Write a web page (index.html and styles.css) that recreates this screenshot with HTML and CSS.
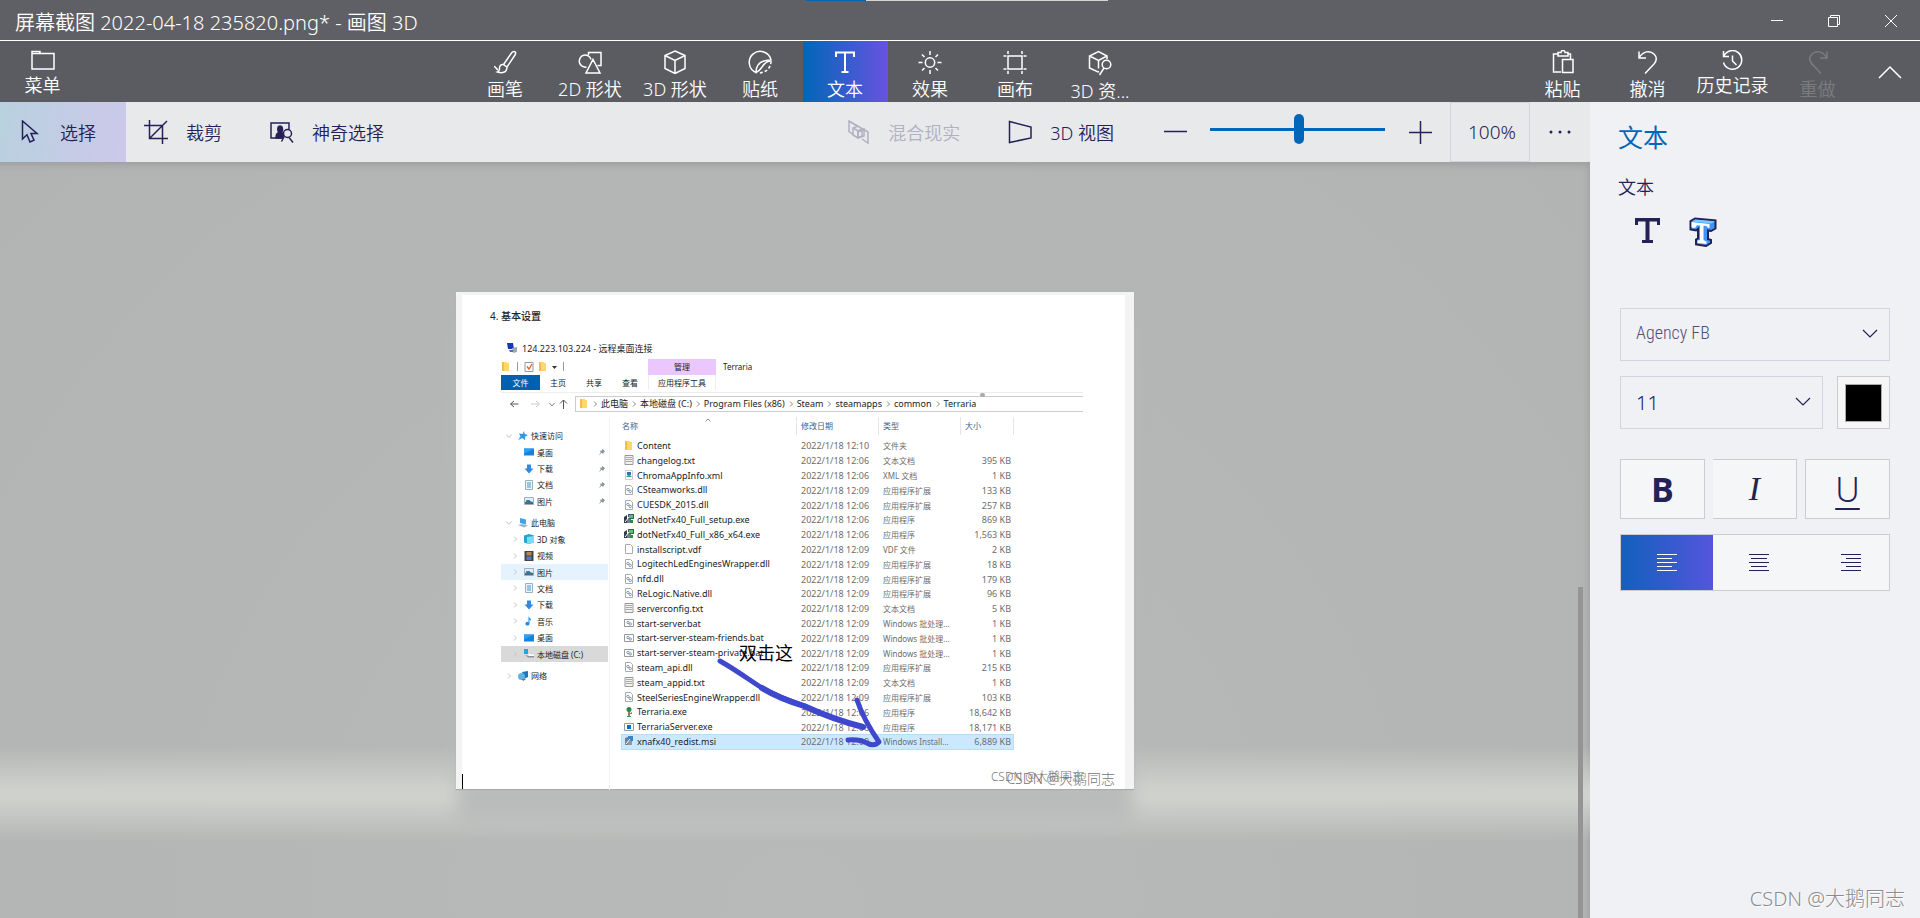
FILE: index.html
```html
<!DOCTYPE html>
<html lang="zh-CN">
<head>
    <meta charset="UTF-8">
    <meta name="viewport" content="width=device-width, initial-scale=1.0">
    <title>画图 3D</title>
    <link rel="stylesheet" href="styles.css">
</head>
<body>
    <!-- Shared icons -->
    <svg class="sprite" aria-hidden="true">
        <symbol id="i-folder" viewBox="0 0 10 10"><path d="M1 0h5v1h2v8H1z" fill="#ffd76e"/><path d="M1 0h2v9H1z" fill="#f3bd4a"/></symbol>
        <symbol id="i-txt" viewBox="0 0 10 10"><path d="M1 .5h8v9H1z" fill="#f2f2f2" stroke="#999"/><path d="M2 2.500h6M2 4.500h6M2 6.500h6" stroke="#aaa"/></symbol>
        <symbol id="i-file" viewBox="0 0 10 10"><path d="M1.500.5h5l2 2v7h-7z" fill="#fff" stroke="#aaa"/></symbol>
        <symbol id="i-dll" viewBox="0 0 10 10"><path d="M1.500.5h5l2 2v7h-7z" fill="#fff" stroke="#aaa"/><circle cx="4" cy="4.500" r="1.200" fill="none" stroke="#7d9bb0"/><circle cx="6.200" cy="6.500" r="1.200" fill="none" stroke="#7d9bb0"/></symbol>
        <symbol id="i-bat" viewBox="0 0 10 10"><path d="M.5 1.500h9v7h-9z" fill="#fff" stroke="#999"/><circle cx="4" cy="4.500" r="1.200" fill="none" stroke="#7d9bb0"/><circle cx="6.200" cy="6" r="1.200" fill="none" stroke="#7d9bb0"/></symbol>
        <symbol id="i-xml" viewBox="0 0 10 10"><path d="M1.500.5h7v9h-7z" fill="#fff" stroke="#ccc"/><path d="M3 2h4v3H3z" fill="#2e74b5"/><path d="M2 7l3-3 3 3z" fill="#35a58b"/></symbol>
        <symbol id="i-setup" viewBox="0 0 10 10"><path d="M4 0h6v5H4z" fill="#44566c"/><path d="M5 1h4v3H5z" fill="#58c46a"/><path d="M0 3l3-2v8H0z" fill="#333b4a"/><path d="M3 5h4v4H3z" fill="#6d7d90"/><path d="M6 6h3v3H6z" fill="#2f8c3b"/><path d="M1 8l4-5" stroke="#fff"/></symbol>
        <symbol id="i-msi" viewBox="0 0 10 10"><path d="M4 0h5v5H4z" fill="#3b84c6"/><path d="M1 2l3-1v8H1z" fill="#75828e"/><path d="M4 5h4v4H4z" fill="#8f9aa3"/><path d="M2 8l4-5" stroke="#fff"/></symbol>
        <symbol id="i-tree" viewBox="0 0 10 10"><path d="M4.200 4h1.600v6H4.200z" fill="#8a5a33"/><circle cx="5" cy="2.500" r="2.500" fill="#258a4b"/><path d="M5 7l3-2v2zM3 9h4v1H3z" fill="#3c9a55"/></symbol>
        <symbol id="i-app" viewBox="0 0 10 10"><path d="M.5 1.500h9v7h-9z" fill="#fff" stroke="#999"/><path d="M3 3h4v4H3z" fill="#0a6fc9"/></symbol>
        <symbol id="i-desk" viewBox="0 0 10 10"><path d="M0 1.500h10v7H0z" fill="#1583dd"/><path d="M0 1.500h10l-10 5z" fill="#2ba0f5"/></symbol>
        <symbol id="i-down" viewBox="0 0 10 10"><path d="M3 .5h4v4h2.500L5 9.500.5 4.500H3z" fill="#2f8bdc"/></symbol>
        <symbol id="i-doc" viewBox="0 0 10 10"><path d="M1.500.5h7v9h-7z" fill="#eef4f8" stroke="#9bb0bd"/><path d="M3 3h4M3 5h4M3 7h4" stroke="#4f94c8"/></symbol>
        <symbol id="i-pic" viewBox="0 0 10 10"><path d="M.5 1.500h9v7h-9z" fill="#dff0fb" stroke="#aab"/><path d="M1 8V6l3-1.500L9 6v2z" fill="#3a7289"/><path d="M2 4h4v1H2z" fill="#2d86d4"/></symbol>
        <symbol id="i-star" viewBox="0 0 10 10"><path d="M6 0l.7 3L10 4 7 5.800 7.200 9.500 4.500 7 0 9l2.500-3.500L1 2.500l3.500.5z" fill="#2f97e6"/></symbol>
        <symbol id="i-pc" viewBox="0 0 10 10"><path d="M2 0l6 1.500v5L2 5z" fill="#3fa3e6"/><path d="M0 7l4-1 6 1.500L6 9.500z" fill="#9fb2c2"/></symbol>
        <symbol id="i-cube" viewBox="0 0 10 10"><path d="M0 1.500L5 0l5 1.500v7L5 10 0 8.500z" fill="#21a5cf"/><path d="M3 3l7-1v6.500L5 10 3 9z" fill="#72e0f2"/></symbol>
        <symbol id="i-video" viewBox="0 0 10 10"><path d="M.5 0h9v10h-9z" fill="#444"/><path d="M2.500 1h5v3.500h-5z" fill="#b88454"/><path d="M2.500 5.500h5V9h-5z" fill="#5b78c4"/></symbol>
        <symbol id="i-music" viewBox="0 0 10 10"><path d="M4.500 0c.5 2 3 2.500 2.500 5-.5-1-1-1.500-1.500-1.500V8a2 1.800 0 1 1-1-1.800z" fill="#1c8de0"/></symbol>
        <symbol id="i-disk" viewBox="0 0 10 10"><path d="M0 0h4v5H0z" fill="#1ba7e0"/><path d="M1 6l3 2.500h6V7H5z" fill="#8c9296"/><path d="M4 5l6 .5V7H5z" fill="#fff"/></symbol>
        <symbol id="i-net" viewBox="0 0 10 10"><path d="M4 1l6-1v6L6 8z" fill="#1f76b8"/><circle cx="3.500" cy="5.500" r="3.500" fill="#5fb4e6"/><path d="M4 8l4 0-3 2z" fill="#4a7592"/></symbol>
        <symbol id="i-pin" viewBox="0 0 10 10"><path d="M5.500 1L9 4.500 7.500 5 6.500 7.500 4.500 6 1 9.500 3.500 5 2 3.500 5 3z" fill="#8a97a3"/></symbol>
        <symbol id="i-right" viewBox="0 0 6 6"><path d="M2 .5L4.500 3 2 5.500" fill="none" stroke="currentColor"/></symbol>
        <symbol id="i-open" viewBox="0 0 6 6"><path d="M.5 1.500L3 4.500l2.500-3" fill="none" stroke="currentColor"/></symbol>
        <symbol id="i-chevron" viewBox="0 0 16 10"><path d="M1 1l7 7 7-7" fill="none" stroke="currentColor" stroke-width="1.200"/></symbol>
    </svg>

    <header class="titlebar">
        <h1>屏幕截图 2022-04-18 235820.png* - 画图 3D</h1>
        <div class="loading"></div>
        <div class="window-buttons">
            <button aria-label="最小化"><svg width="12" height="12" viewBox="0 0 12 12"><path d="M0 5.500h12"/></svg></button>
            <button aria-label="还原"><svg width="12" height="12" viewBox="0 0 12 12"><path d="M.5 2.500h9v9h-9zM2.500 2.500v-2h9v9h-2"/></svg></button>
            <button aria-label="关闭"><svg width="12" height="12" viewBox="0 0 12 12"><path d="M0 0l12 12M12 0L0 12"/></svg></button>
        </div>
    </header>

    <nav class="ribbon">
        <button class="tab">
            <svg width="24" height="20" viewBox="0 0 24 20"><path d="M1 1.500h8v2H23v15.500H1z"/><path d="M1 3.500h7l1-1" /></svg>
            <span>菜单</span>
        </button>
        <div class="tabs">
            <button class="tab">
                <svg width="24" height="24" viewBox="0 0 24 24"><path d="M21 1.500c2 0 2 2 1 3.500l-8 12-3.500-2.500L18.500 3c.8-1 1.500-1.500 2.500-1.500zM10.500 14.500c-2-.5-4 1-4 3.500 0 2-.5 3.500-2 4 4 1.500 9.500 1 9.500-5M1 16.500c2 0 2 3 4 3"/></svg>
                <span>画笔</span>
            </button>
            <button class="tab">
                <svg width="24" height="24" viewBox="0 0 24 24"><path d="M10.500 5V2.500H23v13h-3.500M8.500 17A6 6 0 1 1 13 9.500M15 9.500l7 13.500H8z"/></svg>
                <span>2D 形状</span>
            </button>
            <button class="tab">
                <svg width="24" height="24" viewBox="0 0 24 24"><path d="M12 1l10 4.500v13L12 23.500 2 18.500v-13zM2 5.500l10 5 10-5M12 10.500v13"/></svg>
                <span>3D 形状</span>
            </button>
            <button class="tab">
                <svg width="24" height="24" viewBox="0 0 24 24"><path d="M8 22.500A11 11 0 1 1 23 10C14 10 8 14 8 22.500zM8 22.500C15 20 14 12 22 11"/><path d="M23 11c0 7-5 12-13 12" stroke-dasharray="3 2"/></svg>
                <span>贴纸</span>
            </button>
            <button class="tab active">
                <svg width="24" height="24" viewBox="0 0 24 24"><path d="M3 7V2.500h18V7M12 2.500V22M8.500 22h7" stroke-width="2"/></svg>
                <span>文本</span>
            </button>
            <button class="tab">
                <svg width="24" height="24" viewBox="0 0 24 24"><circle cx="12" cy="12.500" r="4.700"/><path d="M12 1v4M12 20v4M.5 12.500h4M19.500 12.500h4M4 4.500l2.500 2.500M17.500 18l2.500 2.500M20 4.500L17.500 7M6.500 18L4 20.500"/></svg>
                <span>效果</span>
            </button>
            <button class="tab">
                <svg width="24" height="24" viewBox="0 0 24 24"><path d="M5 6h14v13H5zM5 1v3M19 1v3M5 21v3M19 21v3M.5 6h3M20.500 6h3M.5 19h3M20.500 19h3"/></svg>
                <span>画布</span>
            </button>
            <button class="tab">
                <svg width="24" height="26" viewBox="0 0 24 26"><path d="M11 21.500l-1 .5-8.500-4V6L10.500 1.500 19 6v3M1.500 6l9 4.500L19 6M10.500 10.500v8"/><circle cx="18.500" cy="14.500" r="4.300"/><path d="M16 18l-4.500 7"/></svg>
                <span>3D 资...</span>
            </button>
        </div>
        <button class="tab">
            <svg width="24" height="24" viewBox="0 0 24 24"><path d="M10 22H2.500V4H7M17 4h2.500v5M7 2.500h3a2 2 0 0 1 4 0h3V6H7zM11.500 9.500H22v13H11.500z"/></svg>
            <span>粘贴</span>
        </button>
        <button class="tab">
            <svg width="24" height="24" viewBox="0 0 24 24"><path d="M3 1.500V8h7M3 8c4-7 11-8 15-4 3.500 3.500 2.500 7 0 10l-9 9.500"/></svg>
            <span>撤消</span>
        </button>
        <button class="tab">
            <svg width="22" height="20" viewBox="0 0 22 20"><path d="M1.500 1v5.500H7M2 6a9.300 9.300 0 1 1-.5 6.500M10.500 5.500V11l4 4"/></svg>
            <span>历史记录</span>
        </button>
        <button class="tab" disabled>
            <svg width="24" height="24" viewBox="0 0 24 24"><path d="M21 1.500V8h-7M21 8C17 1 10 0 6 4c-3.500 3.500-2.500 7 0 10l9 9.500"/></svg>
            <span>重做</span>
        </button>
        <button class="collapse" aria-label="折叠"><svg width="24" height="14" viewBox="0 0 24 14"><path d="M1 13L12 2l11 11"/></svg></button>
    </nav>

    <div class="content">
        <main class="stage">
            <div class="toolbar">
                <button class="tool selected">
                    <svg width="24" height="24" viewBox="0 0 24 24"><path d="M4.500 1v18l4.500-4.200 3 7.200 4-1.800-3-6.700h6z"/></svg>
                    选择
                </button>
                <button class="tool">
                    <svg width="24" height="24" viewBox="0 0 24 24"><path d="M5.500 0v18.500H24M0 5.500h18.500V24M5.500 18.500L23 1"/></svg>
                    裁剪
                </button>
                <button class="tool">
                    <svg width="24" height="24" viewBox="0 0 24 24"><path d="M12 18H1V3h18v6"/><path d="M6 18c0-4 1-5 3-5.500-2-2-1.500-6.500 1-6.500s3.500 4 1.500 6.500c1 .5 2 1 2 3l-1 2.500z" fill="currentColor"/><circle cx="17.500" cy="13.500" r="4"/><path d="M14 17l-2.500 4.500M19 17.500l4 5"/></svg>
                    神奇选择
                </button>
                <div class="view-tools">
                    <button class="tool" disabled>
                        <svg width="24" height="24" viewBox="0 0 24 24"><path d="M7 14.500l-4-3V1l19 11v11l-6-4M3 1l8 5M7 8l5-2 4 3v7l-4 2-5-3zM7 8l5 3 4-2M12 11v7"/><path d="M12 18v-6l6-3v7z"/></svg>
                        混合现实
                    </button>
                    <button class="tool">
                        <svg width="24" height="24" viewBox="0 0 24 24"><path d="M1.500 1.500l21.500 5.500v11L1.500 22.500z"/></svg>
                        3D 视图
                    </button>
                    <button class="zoom-step zoom-out" aria-label="缩小"><svg width="23" height="23" viewBox="0 0 23 23"><path d="M0 10.500h23"/></svg></button>
                    <input class="zoom-slider" type="range" min="0" max="100" value="51" aria-label="缩放">
                    <button class="zoom-step" aria-label="放大"><svg width="23" height="23" viewBox="0 0 23 23"><path d="M0 11.500h23M11.500 0v23"/></svg></button>
                    <button class="zoom-value">100%</button>
                    <button class="more" aria-label="更多"><svg width="22" height="4" viewBox="0 0 22 4"><circle cx="2" cy="2" r="1.500"/><circle cx="11" cy="2" r="1.500"/><circle cx="20" cy="2" r="1.500"/></svg></button>
                </div>
            </div>

            <div class="workspace">
                <div class="floor"></div>
                <div class="artboard">
                    <h2 class="step">4. <b>基本设置</b></h2>

                    <div class="explorer">
                        <div class="remote-title">
                            <svg width="11" height="11" viewBox="0 0 11 11"><path d="M0 0h6l1 6H1z" fill="#1637b8"/><path d="M5 5l5-1v5l-4 1z" fill="#9aa9b5"/><path d="M2 7h4v2H3z" fill="#5d7088"/></svg>
                            124.223.103.224 - 远程桌面连接
                        </div>
                        <div class="quick-bar">
                            <svg width="10" height="10"><use href="#i-folder"/></svg>
                            <i class="bar"></i>
                            <svg width="10" height="10" viewBox="0 0 10 10"><path d="M1 .5h8v9H1z" fill="#fff" stroke="#999"/><path d="M3 4.500l2 2.500 3-5" fill="none" stroke="#e2622a" stroke-width="1.300"/></svg>
                            <svg width="10" height="10"><use href="#i-folder"/></svg>
                            <svg width="5" height="10" viewBox="0 0 5 10"><path d="M0 4h5L2.500 7z" fill="#333"/></svg>
                            <i class="bar"></i>
                            <span class="manage">管理</span>
                            <span class="folder-name">Terraria</span>
                        </div>
                        <div class="menu-bar">
                            <span class="file-menu">文件</span>
                            <span>主页</span>
                            <span>共享</span>
                            <span>查看</span>
                            <span class="app-tools">应用程序工具</span>
                        </div>
                        <div class="address-row">
                            <svg class="arrows" width="68" height="12" viewBox="0 0 68 12"><path d="M9.500 6h8M13 3L9.500 6l3.500 3M62.500 11V2M59 5.500L62.500 2 66 5.500" stroke="#555"/><path d="M30 6h8M35 3l3.500 3L35 9" stroke="#ccc"/><path d="M48.500 5l2.500 3 2.500-3" stroke="#888"/></svg>
                            <div class="address">
                                <svg width="10" height="10"><use href="#i-folder"/></svg>
                                <svg class="sep"><use href="#i-right"/></svg><span>此电脑</span>
                                <svg class="sep"><use href="#i-right"/></svg><span>本地磁盘 (C:)</span>
                                <svg class="sep"><use href="#i-right"/></svg><span>Program Files (x86)</span>
                                <svg class="sep"><use href="#i-right"/></svg><span>Steam</span>
                                <svg class="sep"><use href="#i-right"/></svg><span>steamapps</span>
                                <svg class="sep"><use href="#i-right"/></svg><span>common</span>
                                <svg class="sep"><use href="#i-right"/></svg><span>Terraria</span>
                            </div>
                            <i class="knob"></i>
                        </div>

                        <div class="panes">
                            <div class="tree">
                                <ul class="quick">
                                    <li class="root"><svg class="sep"><use href="#i-open"/></svg><svg class="ico"><use href="#i-star"/></svg>快速访问</li>
                                    <li><svg class="ico"><use href="#i-desk"/></svg>桌面<svg class="ico pin"><use href="#i-pin"/></svg></li>
                                    <li><svg class="ico"><use href="#i-down"/></svg>下载<svg class="ico pin"><use href="#i-pin"/></svg></li>
                                    <li><svg class="ico"><use href="#i-doc"/></svg>文档<svg class="ico pin"><use href="#i-pin"/></svg></li>
                                    <li><svg class="ico"><use href="#i-pic"/></svg>图片<svg class="ico pin"><use href="#i-pin"/></svg></li>
                                </ul>
                                <ul class="computer">
                                    <li class="root"><svg class="sep"><use href="#i-open"/></svg><svg class="ico"><use href="#i-pc"/></svg>此电脑</li>
                                    <li><svg class="sep"><use href="#i-right"/></svg><svg class="ico"><use href="#i-cube"/></svg>3D 对象</li>
                                    <li><svg class="sep"><use href="#i-right"/></svg><svg class="ico"><use href="#i-video"/></svg>视频</li>
                                    <li class="hover"><svg class="sep"><use href="#i-right"/></svg><svg class="ico"><use href="#i-pic"/></svg>图片</li>
                                    <li><svg class="sep"><use href="#i-right"/></svg><svg class="ico"><use href="#i-doc"/></svg>文档</li>
                                    <li><svg class="sep"><use href="#i-right"/></svg><svg class="ico"><use href="#i-down"/></svg>下载</li>
                                    <li><svg class="sep"><use href="#i-right"/></svg><svg class="ico"><use href="#i-music"/></svg>音乐</li>
                                    <li><svg class="sep"><use href="#i-right"/></svg><svg class="ico"><use href="#i-desk"/></svg>桌面</li>
                                    <li class="current"><svg class="sep"><use href="#i-right"/></svg><svg class="ico"><use href="#i-disk"/></svg>本地磁盘 (C:)</li>
                                </ul>
                                <ul class="network">
                                    <li class="root"><svg class="sep"><use href="#i-right"/></svg><svg class="ico"><use href="#i-net"/></svg>网络</li>
                                </ul>
                            </div>

                            <table class="files">
                                <thead>
                                    <tr><th class="name">名称<svg class="sort" width="6" height="6" viewBox="0 0 6 6"><path d="M.5 4.500L3 2l2.500 2.500" fill="none" stroke="#888"/></svg></th><th class="date">修改日期</th><th class="type">类型</th><th class="size">大小</th></tr>
                                </thead>
                                <tbody>
                                    <tr><td><svg class="ico"><use href="#i-folder"/></svg>Content</td><td>2022/1/18 12:10</td><td class="kind">文件夹</td><td></td></tr>
                                    <tr><td><svg class="ico"><use href="#i-txt"/></svg>changelog.txt</td><td>2022/1/18 12:06</td><td class="kind">文本文档</td><td>395 KB</td></tr>
                                    <tr><td><svg class="ico"><use href="#i-xml"/></svg>ChromaAppInfo.xml</td><td>2022/1/18 12:06</td><td class="kind">XML 文档</td><td>1 KB</td></tr>
                                    <tr><td><svg class="ico"><use href="#i-dll"/></svg>CSteamworks.dll</td><td>2022/1/18 12:09</td><td class="kind">应用程序扩展</td><td>133 KB</td></tr>
                                    <tr><td><svg class="ico"><use href="#i-dll"/></svg>CUESDK_2015.dll</td><td>2022/1/18 12:06</td><td class="kind">应用程序扩展</td><td>257 KB</td></tr>
                                    <tr><td><svg class="ico"><use href="#i-setup"/></svg>dotNetFx40_Full_setup.exe</td><td>2022/1/18 12:06</td><td class="kind">应用程序</td><td>869 KB</td></tr>
                                    <tr><td><svg class="ico"><use href="#i-setup"/></svg>dotNetFx40_Full_x86_x64.exe</td><td>2022/1/18 12:06</td><td class="kind">应用程序</td><td>1,563 KB</td></tr>
                                    <tr><td><svg class="ico"><use href="#i-file"/></svg>installscript.vdf</td><td>2022/1/18 12:09</td><td class="kind">VDF 文件</td><td>2 KB</td></tr>
                                    <tr><td><svg class="ico"><use href="#i-dll"/></svg>LogitechLedEnginesWrapper.dll</td><td>2022/1/18 12:09</td><td class="kind">应用程序扩展</td><td>18 KB</td></tr>
                                    <tr><td><svg class="ico"><use href="#i-dll"/></svg>nfd.dll</td><td>2022/1/18 12:09</td><td class="kind">应用程序扩展</td><td>179 KB</td></tr>
                                    <tr><td><svg class="ico"><use href="#i-dll"/></svg>ReLogic.Native.dll</td><td>2022/1/18 12:09</td><td class="kind">应用程序扩展</td><td>96 KB</td></tr>
                                    <tr><td><svg class="ico"><use href="#i-txt"/></svg>serverconfig.txt</td><td>2022/1/18 12:09</td><td class="kind">文本文档</td><td>5 KB</td></tr>
                                    <tr><td><svg class="ico"><use href="#i-bat"/></svg>start-server.bat</td><td>2022/1/18 12:09</td><td class="kind">Windows 批处理...</td><td>1 KB</td></tr>
                                    <tr><td><svg class="ico"><use href="#i-bat"/></svg>start-server-steam-friends.bat</td><td>2022/1/18 12:09</td><td class="kind">Windows 批处理...</td><td>1 KB</td></tr>
                                    <tr><td><svg class="ico"><use href="#i-bat"/></svg>start-server-steam-private.bat</td><td>2022/1/18 12:09</td><td class="kind">Windows 批处理...</td><td>1 KB</td></tr>
                                    <tr><td><svg class="ico"><use href="#i-dll"/></svg>steam_api.dll</td><td>2022/1/18 12:09</td><td class="kind">应用程序扩展</td><td>215 KB</td></tr>
                                    <tr><td><svg class="ico"><use href="#i-txt"/></svg>steam_appid.txt</td><td>2022/1/18 12:09</td><td class="kind">文本文档</td><td>1 KB</td></tr>
                                    <tr><td><svg class="ico"><use href="#i-dll"/></svg>SteelSeriesEngineWrapper.dll</td><td>2022/1/18 12:09</td><td class="kind">应用程序扩展</td><td>103 KB</td></tr>
                                    <tr><td><svg class="ico"><use href="#i-tree"/></svg>Terraria.exe</td><td>2022/1/18 12:06</td><td class="kind">应用程序</td><td>18,642 KB</td></tr>
                                    <tr><td><svg class="ico"><use href="#i-app"/></svg>TerrariaServer.exe</td><td>2022/1/18 12:06</td><td class="kind">应用程序</td><td>18,171 KB</td></tr>
                                    <tr class="picked"><td><svg class="ico"><use href="#i-msi"/></svg>xnafx40_redist.msi</td><td>2022/1/18 12:09</td><td class="kind">Windows Install...</td><td>6,889 KB</td></tr>
                                </tbody>
                            </table>
                        </div>
                    </div>

                    <!-- Things drawn on top of the picture -->
                    <svg class="drawing" viewBox="0 0 678 497">
                        <path d="M264 369C280 378 292 387 306 396Q322 405 348 414" stroke-width="5"/>
                        <path d="M306 396Q322 406 348 414Q376 427 407 435" stroke-width="6"/>
                        <path d="M401 408C406 423 414 437 423 450Q418 455 411 451Q403 447 392 448" stroke-width="5"/>
                    </svg>
                    <span class="note">双击这</span>
                    <span class="mark mark-small">CSDN @大鹅同志</span>
                    <span class="mark mark-large">CSDN @大鹅同志</span>
                    <span class="caret"></span>
                </div>
                <div class="scrollbar"></div>
            </div>
        </main>

        <aside class="panel">
            <h2>文本</h2>
            <h3>文本</h3>
            <div class="text-kind">
                <button aria-label="2D 文本"><svg width="26" height="28" viewBox="0 0 26 28"><path d="M0 1h25v7h-3V4.500h-7.500V23H18v3H7v-3h3.500V4.500H3V8H0z" fill="#242157"/></svg></button>
                <button aria-label="3D 文本"><svg width="28" height="30" viewBox="0 0 28 30"><path d="M1.500 4L6 1.500l20.500 2v8L22 14l-3-.5v8.500l3 1v3L17 29l-10-1.500v-5l2-1V12l-2 1.500-5.500-1z" fill="#3f95f6" stroke="#242157" stroke-width="2"/><path d="M6 2.500l20 1.800-4 2.200-19-2z" fill="#7cc6ff"/><path d="M2.500 5l18 2v4l-2-.5-1-1.500-3-.3V23l3 1.500V27l-9-1v-2.500l2.500-.5V8.500L8 8.300 6 11l-3.500-.5z" fill="#fff"/></svg></button>
            </div>
            <div class="field">
                <select class="font-family" aria-label="字体"><option>Agency FB</option></select>
                <svg width="16" height="10"><use href="#i-chevron"/></svg>
            </div>
            <div class="size-row">
                <div class="field">
                    <select aria-label="字号"><option>11</option></select>
                    <svg width="16" height="10"><use href="#i-chevron"/></svg>
                </div>
                <button class="color" aria-label="颜色"><span></span></button>
            </div>
            <div class="style-row">
                <button class="bold">B</button>
                <button class="italic">I</button>
                <button class="underline">U</button>
            </div>
            <div class="align-row">
                <button class="active" aria-label="左对齐"><svg width="20" height="18" viewBox="0 0 20 18"><path d="M0 .5h20M0 4.500h15M0 8.500h20M0 12.500h15M0 16.500h20"/></svg></button>
                <button aria-label="居中"><svg width="20" height="18" viewBox="0 0 20 18"><path d="M0 .5h20M2 4.500h16M0 8.500h20M2 12.500h16M0 16.500h20"/></svg></button>
                <button aria-label="右对齐"><svg width="20" height="18" viewBox="0 0 20 18"><path d="M0 .5h20M5 4.500h15M0 8.500h20M5 12.500h15M0 16.500h20"/></svg></button>
            </div>
            <p class="signature">CSDN @大鹅同志</p>
        </aside>
    </div>
</body>
</html>
```
FILE: styles.css
```css
* {
    margin: 0;
    padding: 0;
    box-sizing: border-box;
}

body {
    display: flex;
    flex-direction: column;
    height: 100vh;
    overflow: hidden;
    font-family: "Noto Sans", "Noto Sans CJK SC", sans-serif;
    font-weight: 350;
    font-size: 18px;
    color: #242157;
    background: #b5b7b6;
}

button, select {
    font: inherit;
    color: inherit;
    background: none;
    border: none;
}

ul {
    list-style: none;
}

svg {
    flex: none;
    display: block;
}

button svg {
    fill: none;
    stroke: currentColor;
    stroke-width: 1.5;
}

.sprite {
    position: absolute;
    width: 0;
    height: 0;
}

/* Title bar */
.titlebar {
    position: relative;
    display: flex;
    align-items: center;
    justify-content: space-between;
    height: 41px;
    padding-left: 15px;
    padding-top: 2px;
    background: #5f6065;
    border-bottom: 1px solid #fff;
    color: #fff;
}

.titlebar h1 {
    font-size: 20px;
    font-weight: 350;
}

.loading {
    position: absolute;
    top: 0;
    left: 42%;
    width: 302px;
    height: 1px;
    background: linear-gradient(90deg, #0067b8 60px, #d5d5d5 60px);
}

.window-buttons {
    display: flex;
}

.window-buttons button {
    width: 57px;
    height: 34px;
    display: flex;
    align-items: center;
    justify-content: center;
    padding-right: 2px;
}

.window-buttons svg {
    stroke-width: 1;
}

/* Ribbon */
.ribbon {
    display: flex;
    height: 61px;
    background: #5b5c61;
    color: #fff;
}

.tabs {
    flex: 1;
    display: flex;
    justify-content: center;
}

.tab {
    width: 85px;
    padding-top: 9px;
    display: flex;
    flex-direction: column;
    align-items: center;
    gap: 2px;
    line-height: 26px;
    white-space: nowrap;
}

.tab.active {
    background: linear-gradient(90deg, #0067b8, #6853e0);
}

.tab:disabled {
    color: #7b7c80;
}

.collapse {
    width: 60px;
    display: flex;
    align-items: center;
    justify-content: center;
}

.content {
    flex: 1;
    display: flex;
    min-height: 0;
}

.stage {
    flex: 1;
    display: flex;
    flex-direction: column;
    min-width: 0;
}

/* Toolbar */
.toolbar {
    display: flex;
    height: 60px;
    background: #e8e9eb;
}

.tool {
    display: flex;
    align-items: center;
    gap: 18px;
    padding: 0 30px 0 18px;
    white-space: nowrap;
}

.tool.selected {
    background: linear-gradient(100deg, #b8d1df, #cdc8ea);
}

.tool:disabled {
    margin-right: 4px;
    color: #b0b0c2;
}

.view-tools {
    display: flex;
    align-items: center;
    margin-left: auto;
}

.view-tools .tool {
    height: 60px;
    padding-right: 26px;
}

.zoom-step {
    width: 60px;
    height: 60px;
    display: flex;
    align-items: center;
    justify-content: center;
}

.zoom-out {
    width: 70px;
}

.zoom-slider {
    appearance: none;
    width: 175px;
    height: 54px;
    margin: 0 5px 6px 0;
    background: none;
}

.zoom-slider::-webkit-slider-runnable-track {
    height: 3px;
    background: #0067b8;
}

.zoom-slider::-webkit-slider-thumb {
    appearance: none;
    width: 10px;
    height: 30px;
    margin-top: -14px;
    border-radius: 5px;
    background: #0067b8;
}

.zoom-value {
    width: 80px;
    height: 60px;
    border: 1px solid #d3d4de;
    padding-left: 4px;
    font-size: 19px;
}

.more {
    width: 60px;
    display: flex;
    justify-content: center;
}

.more svg {
    fill: currentColor;
    stroke: none;
}

/* Workspace */
.workspace {
    position: relative;
    flex: 1;
    display: flex;
    align-items: center;
    justify-content: center;
    background: radial-gradient(circle at 50% 100%, #b8bab9, #b2b4b3);
    box-shadow: inset -6px 8px 8px -6px #999b9a;
}

.floor {
    position: absolute;
    left: 0;
    right: 0;
    bottom: 76px;
    height: 96px;
    background: linear-gradient(#cfd1cd00, #cfd1cd 45%, #cfd1cd 55%, #cfd1cd00);
}

.scrollbar {
    position: absolute;
    right: 7px;
    bottom: 0;
    width: 5px;
    height: 331px;
    background: #949494;
}

.artboard {
    position: relative;
    width: 678px;
    height: 497px;
    padding: 14px 42px 0 28px;
    border: solid #f3f3f3;
    border-width: 3px 9px 0 6px;
    background: #fff;
    color: #222;
    font-size: 8px;
    font-weight: 400;
    box-shadow: 0 1px 1px #a9abaa, 0 36px 16px -2px #babcbb;
}

.step {
    font-size: 10px;
    font-weight: 400;
    line-height: 15px;
}

.step b {
    font-weight: 500;
}

.explorer {
    padding: 17px 0 0 11px;
}

.remote-title {
    display: flex;
    align-items: center;
    gap: 4px;
    height: 16px;
    padding-left: 6px;
    font-size: 9px;
}

.quick-bar {
    display: flex;
    align-items: center;
    gap: 4px;
    height: 16px;
    margin-top: 2px;
}

.quick-bar .bar {
    width: 1px;
    height: 9px;
    margin: 0 2px;
    background: #999;
}

.manage {
    width: 68px;
    margin-left: 78px;
    line-height: 16px;
    text-align: center;
    background: #eac8ff;
}

.folder-name {
    margin-left: 3px;
}

.menu-bar {
    display: flex;
    height: 18px;
    line-height: 15px;
    border-bottom: 1px solid #eee;
}

.menu-bar span {
    width: 36px;
    text-align: center;
    white-space: nowrap;
}

.menu-bar .file-menu {
    width: 39px;
    height: 15px;
    color: #fff;
    background: #0061b0;
}

.menu-bar .app-tools {
    width: 68px;
    height: 15px;
    border: solid #eee;
    border-width: 0 1px;
}

.address-row {
    position: relative;
    display: flex;
    align-items: center;
    height: 16px;
    margin-top: 3px;
}

.knob {
    position: absolute;
    top: -3px;
    right: 98px;
    width: 5px;
    height: 4px;
    border-radius: 2px;
    background: #aaa;
}

.arrows {
    fill: none;
}

.address {
    flex: 1;
    display: flex;
    align-items: center;
    gap: 3px;
    height: 16px;
    margin-left: 6px;
    padding-left: 3px;
    border: 1px solid #ccc;
    border-right: none;
    font-size: 9px;
    white-space: nowrap;
}

.sep {
    width: 6px;
    height: 6px;
    color: #888;
}

.panes {
    display: flex;
    margin-top: 5px;
}

.tree {
    width: 109px;
    height: 373px;
    padding-top: 11px;
    border-right: 1px solid #f2f2f2;
}

.tree ul {
    display: flex;
    flex-direction: column;
    margin-bottom: 5px;
}

.quick {
    height: 82px;
}

.computer {
    height: 148px;
}

.network {
    height: 16px;
}

.tree li {
    flex: 1;
    display: flex;
    align-items: center;
    gap: 3px;
    width: 107px;
    padding-left: 11px;
}

.tree li.root {
    padding-left: 5px;
}

.quick li:not(.root) {
    padding-left: 23px;
}

.tree .sep {
    margin-right: 3px;
    color: #c4c4c4;
}

.ico {
    width: 10px;
    height: 10px;
}

.tree .pin {
    width: 8px;
    height: 8px;
    margin: 0 2px 0 auto;
}

.tree .hover {
    background: #e5f3ff;
}

.tree .current {
    background: #d9d9d9;
}

.files {
    width: 393px;
    height: 333px;
    margin-left: 11px;
    table-layout: fixed;
    border-collapse: collapse;
    white-space: nowrap;
}

.files th {
    position: relative;
    height: 22px;
    padding: 0 0 4px 4px;
    font-weight: 400;
    text-align: left;
    color: #44618a;
    background: linear-gradient(#e5e5e5, #e5e5e5) right 0 / 1px 18px no-repeat;
}

.files .name {
    width: 176px;
    padding-left: 1px;
}

.files .date, .files .type {
    width: 82px;
}

.sort {
    position: absolute;
    top: 0;
    left: 48%;
}

.files td {
    padding: 0 3px 0 4px;
    font-size: 9px;
    line-height: 13px;
    color: #6d6d6d;
}

.files td:first-child {
    display: flex;
    align-items: center;
    gap: 3px;
    height: 14px;
    padding-left: 3px;
    color: #222;
}

.files td:last-child {
    text-align: right;
}

.files .kind {
    font-size: 8px;
}

.files .picked {
    background: #cce8ff;
    outline: 1px solid #b5dcf8;
    outline-offset: -1px;
}

/* Drawn on top */
.drawing {
    position: absolute;
    inset: -3px -9px 0 -6px;
    fill: none;
    stroke: #3f48cc;
    stroke-linecap: round;
    stroke-linejoin: round;
}

.note {
    position: absolute;
    left: 277px;
    top: 345px;
    font-size: 18px;
    line-height: 26px;
    color: #000;
}

.mark {
    position: absolute;
    font-weight: 300;
    color: #777;
    white-space: nowrap;
}

.mark-small {
    right: 41px;
    bottom: 4px;
    font-size: 12px;
}

.mark-large {
    right: 10px;
    bottom: 1px;
    font-size: 14px;
}

.caret {
    position: absolute;
    left: 0;
    bottom: 0;
    width: 1px;
    height: 15px;
    background: #000;
}

/* Side panel */
.panel {
    width: 330px;
    display: flex;
    flex-direction: column;
    padding: 19px 30px 4px 28px;
    background: #f0f1f4;
}

.panel > * {
    margin-left: 2px;
}

.panel h2, .panel h3 {
    margin-left: 0;
}

.panel h2 {
    font-size: 25px;
    line-height: 32px;
    font-weight: 400;
    color: #0067b8;
}

.panel h3 {
    margin-top: 20px;
    font-size: 18px;
    line-height: 28px;
    font-weight: 350;
}

.text-kind {
    display: flex;
    gap: 28px;
    padding: 16px 15px 0;
    height: 107px;
    align-items: flex-start;
}

.text-kind svg {
    stroke: none;
}

.field {
    position: relative;
    flex: 1 0 auto;
    max-height: 53px;
}

.field select {
    appearance: none;
    width: 100%;
    height: 53px;
    padding-left: 15px;
    border: 1px solid #d3d4e0;
    font-size: 20px;
}

.field svg {
    position: absolute;
    right: 12px;
    top: 21px;
    pointer-events: none;
}

.field .font-family {
    padding-bottom: 4px;
    font-family: "Roboto Condensed", "Liberation Sans", sans-serif;
    font-size: 18px;
    color: #504e78;
}

.size-row {
    display: flex;
    gap: 14px;
    margin-top: 15px;
}

.color {
    width: 53px;
    height: 53px;
    padding: 7px;
    border: 1px solid #ccc;
    background: #f5f6f5;
}

.color span {
    display: block;
    height: 38px;
    border: 1px solid #aaa;
    background: #000;
}

.style-row {
    display: flex;
    gap: 8px;
    margin-top: 30px;
}

.style-row button {
    flex: 1;
    height: 60px;
    border: 1px solid #ccc;
    background: #f5f6f8;
    font-size: 34px;
    line-height: 50px;
}

.style-row .bold {
    font-family: "Open Sans", sans-serif;
    font-weight: 700;
}

.style-row .italic {
    border-left: none;
    font-family: "Liberation Serif", serif;
    font-style: italic;
}

.style-row .underline {
    text-decoration: underline;
    text-decoration-thickness: 2px;
    text-underline-offset: 6px;
}

.align-row {
    display: flex;
    height: 57px;
    margin-top: 15px;
    border: 1px solid #ccc;
    background: #f5f6f8;
    overflow: hidden;
}

.align-row button {
    flex: none;
    width: 92px;
    display: flex;
    align-items: center;
    justify-content: center;
}

.align-row svg {
    stroke-width: 1;
}

.align-row .active {
    color: #fff;
    background: linear-gradient(90deg, #1260bd, #5455dc);
}

.signature {
    margin-top: auto;
    margin-right: -15px;
    text-align: right;
    font-size: 20px;
    font-weight: 300;
    line-height: 30px;
    color: #8a8c8f;
    text-shadow: 1px 1px 0 #fff;
}
```
